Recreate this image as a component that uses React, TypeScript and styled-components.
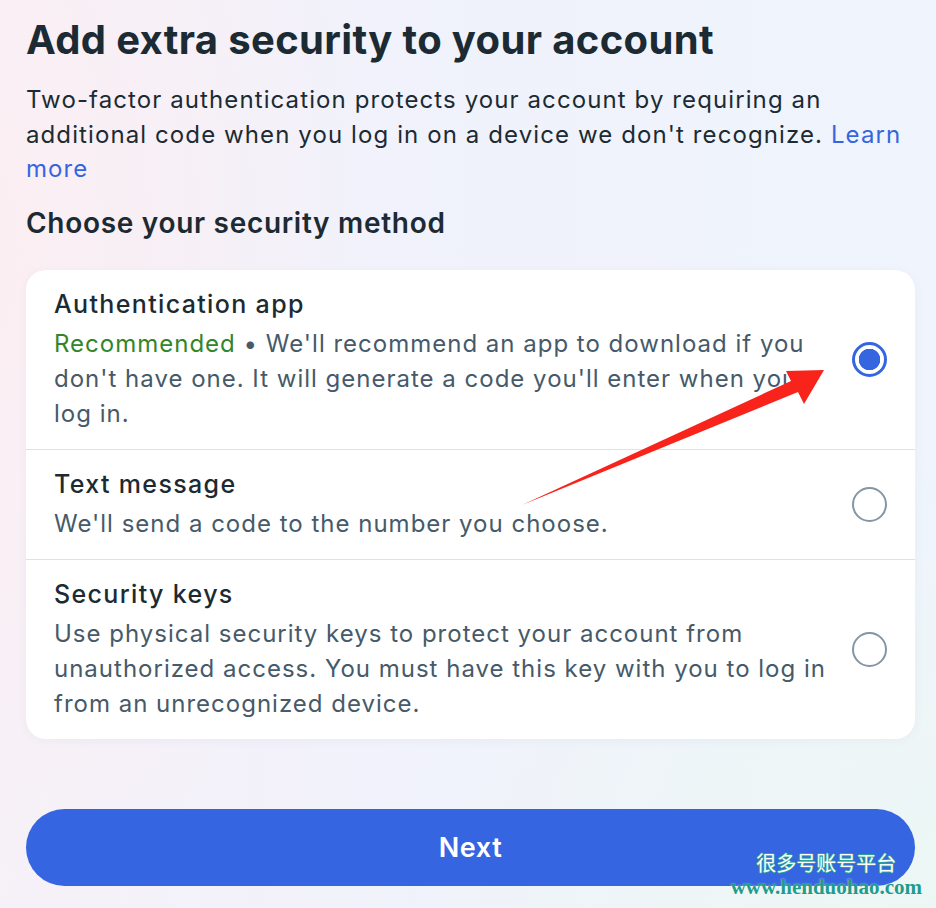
import { FC, useState } from "react";
import styled, { createGlobalStyle } from "styled-components";

const GlobalStyle = createGlobalStyle`
    html, body {
        margin: 0;
        padding: 0;
    }
    body {
        font-family: Inter, "Noto Sans", "Liberation Sans", sans-serif;
        color: #1c2b33;
        background: #f1f3fb;
    }
    * {
        box-sizing: border-box;
    }
`;

const methods = [
    {
        id: 'app',
        title: 'Authentication app',
        recommended: true,
        text: "We'll recommend an app to download if you don't have one. It will generate a code you'll enter when you log in.",
    },
    {
        id: 'sms',
        title: 'Text message',
        text: "We'll send a code to the number you choose.",
    },
    {
        id: 'keys',
        title: 'Security keys',
        text: 'Use physical security keys to protect your account from unauthorized access. You must have this key with you to log in from an unrecognized device.',
    },
];

const App: FC = () => {
    const [selected, setSelected] = useState('app');
    return (
        <>
            <GlobalStyle />
            <Page>
                <Title>Add extra security to your account</Title>
                <Lead>
                    Two-factor authentication protects your account by requiring an
                    additional code when you log in on a device we don't recognize.{' '}
                    <Link href="#">Learn more</Link>
                </Lead>
                <SubTitle>Choose your security method</SubTitle>
                <Card>
                    {methods.map(({ id, title, recommended, text }) => (
                        <Option key={id} onClick={() => setSelected(id)}>
                            <OptionText>
                                <OptionTitle>{title}</OptionTitle>
                                <OptionDesc>
                                    {recommended ? (
                                        <>
                                            <Green>Recommended</Green> • {text}
                                        </>
                                    ) : (
                                        text
                                    )}
                                </OptionDesc>
                            </OptionText>
                            <Radio $checked={selected === id} />
                        </Option>
                    ))}
                </Card>
                <NextButton>Next</NextButton>

                <Arrow width="936" height="908" viewBox="0 0 936 908">
                    <polygon
                        points="522,505 791,381 786,371 824,370 804,404 798,392"
                        fill="#f8241b"
                    />
                </Arrow>
                <Watermark>
                    <WatermarkCn>很多号账号平台</WatermarkCn>
                    <WatermarkUrl>www.henduohao.com</WatermarkUrl>
                </Watermark>
            </Page>
        </>
    );
};

export default App;

const Page = styled.main`
    position: relative;
    width: 936px;
    height: 908px;
    overflow: hidden;
    padding: 17px 21px 0 26px;
    display: flex;
    flex-direction: column;
    background:
        radial-gradient(ellipse 420px 700px at -60px 250px, rgba(252, 238, 242, 0.95), rgba(252, 238, 242, 0) 100%),
        radial-gradient(ellipse 600px 500px at 950px 950px, rgba(236, 247, 243, 1), rgba(236, 247, 243, 0) 100%),
        linear-gradient(90deg, #f6f1f8 0%, #f1f2fb 40%, #eff4fd 100%);
`;

const Title = styled.h1`
    margin: 0;
    font-size: 40px;
    line-height: 46px;
    font-weight: 700;
    letter-spacing: 0.35px;
    color: #1c2b33;
`;

const Lead = styled.p`
    margin: 20px 0 0;
    font-size: 24px;
    line-height: 34.5px;
    letter-spacing: 1.1px;
    color: #1c2b33;
`;

const Link = styled.a`
    color: #3566e0;
    text-decoration: none;
`;

const SubTitle = styled.h2`
    margin: 18px 0 0;
    font-size: 28px;
    line-height: 36px;
    font-weight: 600;
    letter-spacing: 0.7px;
    color: #1c2b33;
`;

const Card = styled.div`
    margin-top: 29px;
    background: #fff;
    border-radius: 20px;
    box-shadow: 0 2px 12px rgba(30, 50, 90, 0.04);
    overflow: hidden;
`;

const Option = styled.div`
    display: flex;
    align-items: center;
    gap: 16px;
    padding: 17.5px 28px;
    cursor: pointer;
    & + & {
        border-top: 1px solid #dde1ea;
    }
`;

const OptionText = styled.div`
    flex: 1;
    display: flex;
    flex-direction: column;
    gap: 4px;
`;

const OptionTitle = styled.div`
    font-size: 25px;
    line-height: 35px;
    font-weight: 500;
    letter-spacing: 1.35px;
    color: #1c2b33;
`;

const OptionDesc = styled.div`
    font-size: 24px;
    line-height: 35px;
    letter-spacing: 1px;
    color: #465a69;
`;

const Green = styled.span`
    color: #31862a;
`;

const Radio = styled.span<{ $checked: boolean }>`
    flex: none;
    width: 35px;
    height: 35px;
    border-radius: 50%;
    border: ${({ $checked }) => ($checked ? '3px solid #3566e0' : '2.5px solid #8595a4')};
    background: ${({ $checked }) =>
        $checked ? 'radial-gradient(circle, #3566e0 0 10.5px, transparent 11px)' : 'transparent'};
`;

const NextButton = styled.button`
    margin-top: 70px;
    height: 77px;
    width: 100%;
    border: none;
    border-radius: 40px;
    background: #3565e0;
    color: #fff;
    font-family: inherit;
    font-size: 27px;
    font-weight: 600;
    letter-spacing: 0.6px;
    cursor: pointer;
`;

const Arrow = styled.svg`
    position: absolute;
    left: 0;
    top: 0;
    pointer-events: none;
`;

const Watermark = styled.div`
    position: absolute;
    right: 14px;
    bottom: 9px;
    display: flex;
    flex-direction: column;
    align-items: center;
    pointer-events: none;
`;

const WatermarkCn = styled.div`
    font-family: "Noto Sans CJK SC", sans-serif;
    font-size: 20px;
    line-height: 24px;
    font-weight: 400;
    color: #fff;
    text-shadow:
        1px 0 0 #2aa096,
        -1px 0 0 #2aa096,
        0 1px 0 #2aa096,
        0 -1px 0 #2aa096;
`;

const WatermarkUrl = styled.div`
    font-family: "Liberation Serif", serif;
    font-size: 21px;
    line-height: 24px;
    font-weight: 700;
    color: #1f9c8c;
    text-shadow: 0 0 2px rgba(255, 255, 255, 0.7);
`;
